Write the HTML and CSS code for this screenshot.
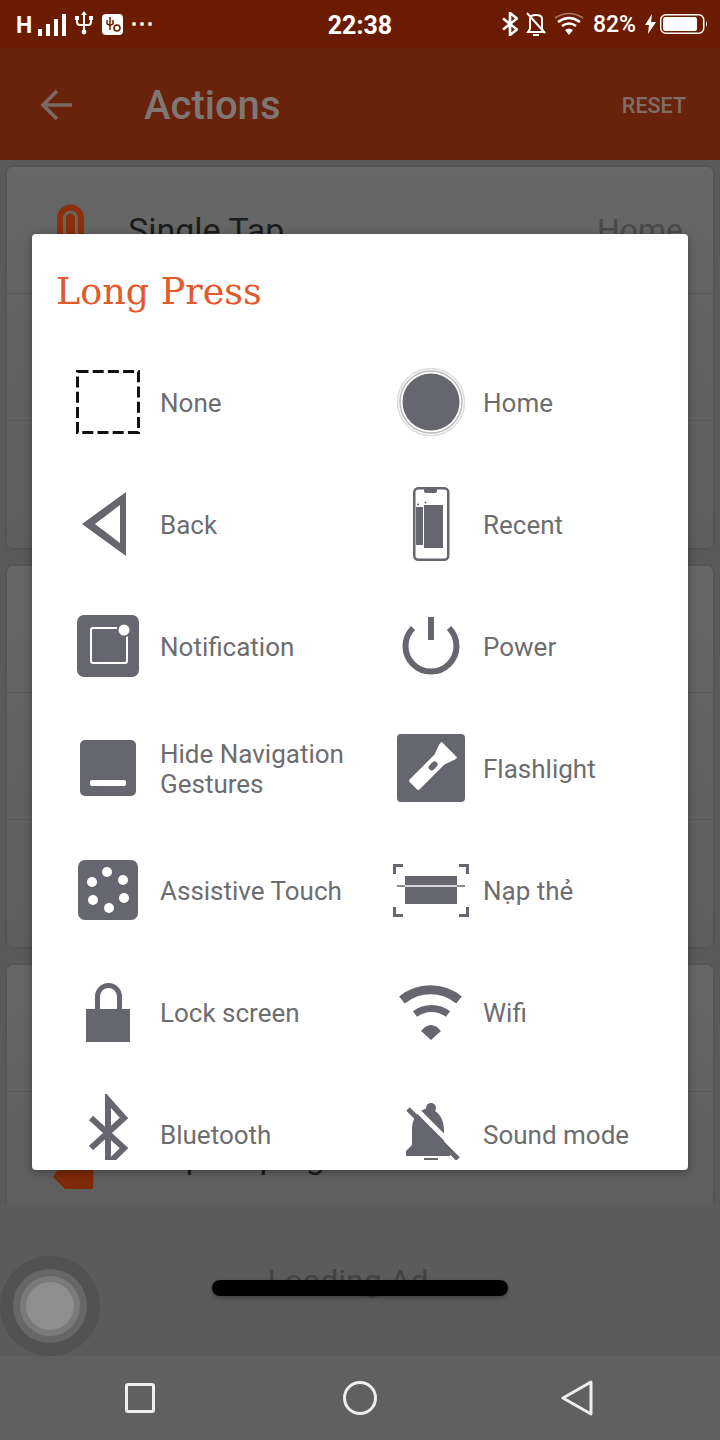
FILE: index.html
```html
<!DOCTYPE html>
<html lang="en">
<head>
  <meta charset="UTF-8">
  <title>Actions</title>
  <link rel="stylesheet" href="styles.css">
</head>
<body>
  <div class="screen">
    <div class="status-bar">
      <div class="status-left">
        <span class="net">H</span>
        <svg class="st-bars" viewBox="0 0 28 22"><path d="M0 15h4v7H0zM8 10h4v12H8zM16 5h4v17h-4zM24 0h4v22h-4z" fill="#fff"/></svg>
        <svg class="st-usb" viewBox="0 0 20 24" fill="none" stroke="#fff" stroke-width="2"><path d="M10 3v18M3 8v3q0 3 3 3h8q3 0 3-3V8"/><path d="M10 0l3 4H7z" fill="#fff" stroke="none"/><circle cx="10" cy="21" r="2.4" fill="#fff" stroke="none"/><path d="M1 5h4v4H1zM15 5h4v4h-4z" fill="#fff" stroke="none"/></svg>
        <svg class="st-app" viewBox="0 0 21 21"><rect width="21" height="21" rx="4" fill="#fff"/><path d="M8 3v13M5 6v3q0 2 3 2t3-2V6" fill="none" stroke="#6b1b00" stroke-width="1.5"/><circle cx="15" cy="14" r="3" fill="none" stroke="#6b1b00" stroke-width="1.6"/></svg>
        <span class="dots"><i></i><i></i><i></i></span>
      </div>
      <div class="clock">22:38</div>
      <div class="status-right">
        <svg class="st-bt" viewBox="0 0 16 24" fill="none" stroke="#fff" stroke-width="2.6"><path d="M1 6.500l14 11-7 5.500V1l7 5.500-14 11"/></svg>
        <svg class="st-bell" viewBox="0 0 20 24" fill="none" stroke="#fff" stroke-width="2"><path d="M4 7v10l-2 3h16l-2-3V7q0-4-6-4T4 7zM1 1l18 20"/><path d="M7 23h6"/></svg>
        <svg class="st-wifi" viewBox="0 0 30 24" fill="none" stroke="#fff"><path d="M1 6Q15-3 29 6" stroke="#a9776a" stroke-width="1.500"/><path d="M4 10q11-8 22 0M8 14q7-5 14 0" stroke-width="2.500"/><path d="M11 18q4-3 8 0l-4 5z" fill="#fff" stroke="none"/></svg>
        <span class="pct">82%</span>
        <svg class="st-bolt" viewBox="0 0 11 20"><path d="M7 0L0 11h4l-1 9 8-12H6z" fill="#fff"/></svg>
        <svg class="st-batt" viewBox="0 0 48 20"><rect x=".75" y=".75" width="43" height="18.500" rx="5" fill="none" stroke="#fff" stroke-width="1.500"/><rect x="3" y="3" width="34" height="14" rx="2.500" fill="#fff"/><path d="M46 7q2 3 0 6z" fill="#fff"/></svg>
      </div>
    </div>

    <div class="app-bar">
      <svg class="back-arrow" viewBox="0 0 32 32" fill="none" stroke="#7d6b63" stroke-width="3.500"><path d="M32 16H3M17 2L3 16l14 14"/></svg>
      <div class="app-title">Actions</div>
      <div class="reset">RESET</div>
    </div>

    <div class="list">
      <div class="card">
        <div class="row">
          <svg class="row-icon" viewBox="0 0 45 70" fill="none"><path d="M10 40V23a10.500 10.500 0 0 1 21 0v17" stroke="#8c2f0b" stroke-width="6"/><path d="M20.500 23v41" stroke="#8c2f0b" stroke-width="9" stroke-linecap="round"/></svg>
          <span class="row-name">Single Tap</span>
          <span class="row-value">Home</span>
        </div>
        <div class="row"></div>
        <div class="row"></div>
      </div>
      <div class="card">
        <div class="row"></div>
        <div class="row"></div>
        <div class="row"></div>
      </div>
      <div class="card">
        <div class="row"></div>
        <div class="row">
          <svg class="row-icon" viewBox="0 0 45 70"><path d="M3 56l12 12h28l1-38H20z" fill="#7e2a08"/></svg>
          <span class="row-name">Snap on ping</span>
        </div>
      </div>
    </div>

    <div class="ad">Loading Ad</div>

    <div class="nav-bar">
      <svg class="nav-square" viewBox="0 0 30 30"><rect x="1.500" y="1.500" width="27" height="27" rx="1.500" fill="none" stroke="#eee" stroke-width="3"/></svg>
      <svg class="nav-circle" viewBox="0 0 34 34"><circle cx="17" cy="17" r="15.500" fill="none" stroke="#eee" stroke-width="3"/></svg>
      <svg class="nav-back" viewBox="0 0 32 36"><path d="M2 18L30 2v32z" fill="none" stroke="#eee" stroke-width="3" stroke-linejoin="round"/></svg>
    </div>

    <div class="assist"><div class="assist-mid"><div class="assist-core"></div></div></div>
    <div class="home-pill"></div>

    <div class="dialog">
      <h2 class="dialog-title">Long Press</h2>
      <div class="grid">
        <div class="item">
          <svg class="icon" viewBox="0 0 80 80"><rect x="9.500" y="9.500" width="61" height="61" fill="none" stroke="#111" stroke-width="3" stroke-dasharray="11 4.200"/></svg>
          <span>None</span>
        </div>
        <div class="item">
          <svg class="icon" viewBox="0 0 80 80"><circle cx="40" cy="40" r="28.500" fill="#66666e"/><circle cx="40" cy="40" r="31" fill="none" stroke="#bbb" stroke-width="1.500"/><circle cx="40" cy="40" r="33.500" fill="none" stroke="#ddd" stroke-width="1.500"/></svg>
          <span>Home</span>
        </div>
        <div class="item">
          <svg class="icon" viewBox="0 0 80 80"><path d="M14 40L58 8v64zM27 40l25 19V21z" fill="#66666e" fill-rule="evenodd"/></svg>
          <span>Back</span>
        </div>
        <div class="item">
          <svg class="icon" viewBox="0 0 80 80"><rect x="23.250" y="4.250" width="34" height="71.500" rx="4" fill="none" stroke="#66666e" stroke-width="2.500"/><path d="M33 5h13v2q0 2-2 2H35q-2 0-2-2z" fill="#66666e"/><path d="M25 23h7v38h-7zM33 21h19v43H33z" fill="#66666e"/><circle cx="27" cy="20.500" r="1" fill="#66666e"/><circle cx="34.500" cy="18.500" r="1" fill="#66666e"/></svg>
          <span>Recent</span>
        </div>
        <div class="item">
          <svg class="icon" viewBox="0 0 80 80"><rect x="9" y="9" width="62" height="62" rx="7" fill="#66666e"/><rect x="23" y="22" width="36" height="35" rx="2" fill="none" stroke="#fff" stroke-width="2"/><circle cx="56" cy="24" r="7.500" fill="#66666e"/><circle cx="56" cy="24" r="5.500" fill="#fff"/></svg>
          <span>Notification</span>
        </div>
        <div class="item">
          <svg class="icon" viewBox="0 0 80 80" fill="none" stroke="#66666e" stroke-width="6"><path d="M22 22A25.500 25.500 0 1 0 58 22"/><path d="M40 11v23"/></svg>
          <span>Power</span>
        </div>
        <div class="item">
          <svg class="icon" viewBox="0 0 80 80"><rect x="12" y="12" width="56" height="56" rx="5" fill="#66666e"/><rect x="22" y="52" width="36" height="6" rx="2" fill="#fff"/></svg>
          <span>Hide Navigation<br>Gestures</span>
        </div>
        <div class="item">
          <svg class="icon" viewBox="0 0 80 80"><rect x="6" y="6" width="68" height="68" rx="4" fill="#66666e"/><g transform="rotate(45 40 40)"><path d="M29 14h22v3l-4 11v35q0 2-2 2H35q-2 0-2-2V28l-4-11z" fill="#fff"/><rect x="37" y="32" width="6" height="10" rx="3" fill="#66666e"/></g></svg>
          <span>Flashlight</span>
        </div>
        <div class="item">
          <svg class="icon" viewBox="0 0 80 80"><rect x="10" y="10" width="60" height="60" rx="7" fill="#66666e"/><g fill="#fff"><circle cx="39" cy="22" r="5"/><circle cx="55" cy="30" r="5"/><circle cx="56" cy="48" r="5"/><circle cx="41" cy="58" r="5"/><circle cx="25" cy="50" r="5"/><circle cx="24" cy="32" r="5"/></g></svg>
          <span>Assistive Touch</span>
        </div>
        <div class="item">
          <svg class="icon" viewBox="0 0 80 80"><path d="M12 15.500H3.500V24M68 15.500h8.500V24M12 65.500H3.500V57M68 65.500h8.500V57" fill="none" stroke="#66666e" stroke-width="3"/><rect x="14" y="26" width="52" height="28" fill="#66666e"/><path d="M6 36h8M66 36h8" stroke="#66666e" stroke-width="1.500"/><path d="M14 36h52" stroke="#fff" stroke-width="1.500"/></svg>
          <span>Nạp thẻ</span>
        </div>
        <div class="item">
          <svg class="icon" viewBox="0 0 80 80"><path d="M29.500 37V24.500a11 11 0 0 1 22 0V37" fill="none" stroke="#66666e" stroke-width="5"/><rect x="18" y="37" width="44" height="33" fill="#66666e"/></svg>
          <span>Lock screen</span>
        </div>
        <div class="item">
          <svg class="icon" viewBox="0 0 80 80" fill="none" stroke="#66666e"><path d="M11 28A45 45 0 0 1 68 28" stroke-width="9"/><path d="M24 42A28 28 0 0 1 57 42" stroke-width="7"/><path d="M30 59Q40 47 50 59L40 68z" fill="#66666e" stroke="none"/></svg>
          <span>Wifi</span>
        </div>
        <div class="item">
          <svg class="icon icon-cut" viewBox="0 0 80 80" fill="none" stroke="#66666e" stroke-width="6"><path d="M23 24l33 30-16 16V6l16 18-33 30"/></svg>
          <span>Bluetooth</span>
        </div>
        <div class="item">
          <svg class="icon icon-cut" viewBox="0 0 80 80"><circle cx="40" cy="14" r="5" fill="#66666e"/><path d="M40 14c-12 0-19 10-19 22v15l-6 6v5h44v-5l-6-6V36c0-12-7-22-19-22z" fill="#66666e"/><path d="M22 12l50 50" stroke="#fff" stroke-width="5"/><path d="M17 15l50 50" stroke="#66666e" stroke-width="5"/><path d="M33 65h14" stroke="#66666e" stroke-width="2"/></svg>
          <span>Sound mode</span>
        </div>
      </div>
    </div>
  </div>
</body>
</html>
```
FILE: styles.css
```css
* {
  box-sizing: border-box;
}
html, body {
  margin: 0;
  padding: 0;
}
body {
  font-family: Roboto, sans-serif;
  background-color: #5a5a5a;
}
svg {
  display: block;
  flex: none;
}
.screen {
  position: relative;
  width: 720px;
  height: 1440px;
  overflow: hidden;
  display: flex;
  flex-direction: column;
}

/* status bar */
.status-bar {
  height: 48px;
  background-color: #6b1b00;
  color: white;
  display: grid;
  grid-template-columns: 1fr auto 1fr;
  align-items: center;
  padding: 0 12px;
}
.status-left, .status-right {
  display: flex;
  align-items: center;
  gap: 8px;
}
.status-right {
  justify-content: flex-end;
}
.net {
  font-size: 23px;
  font-weight: 700;
  width: 14px;
  line-height: 1;
  margin: 2px 0 0 4px;
}
.st-bars { width: 28px; height: 22px; margin-top: 1px; }
.st-usb { width: 20px; height: 24px; margin-top: -2px; }
.st-app { width: 21px; height: 21px; }
.st-bt { width: 16px; height: 24px; }
.st-bell { width: 20px; height: 24px; }
.st-wifi { width: 30px; height: 24px; margin-right: 1px; }
.st-bolt { width: 11px; height: 20px; }
.st-batt { width: 48px; height: 20px; margin-left: -4px; }
.dots {
  display: flex;
  gap: 4px;
  margin-left: 1px;
}
.dots i {
  width: 4px;
  height: 4px;
  border-radius: 50%;
  background: white;
}
.clock {
  font-size: 25px;
  font-weight: 700;
  margin-top: 2px;
}
.pct {
  font-size: 23px;
  font-weight: 500;
  margin-right: 1px;
}

/* app bar */
.app-bar {
  height: 112px;
  background-color: #69230c;
  display: flex;
  align-items: center;
  padding: 0 34px 0 40px;
}
.back-arrow {
  width: 32px;
  height: 32px;
  margin-top: 1px;
}
.app-title {
  margin-left: 72px;
  font-size: 40px;
  font-weight: 500;
  color: #7f7773;
  flex: 1;
  padding-top: 3px;
}
.reset {
  font-size: 21.5px;
  font-weight: 500;
  color: #7e6e66;
  padding-top: 2px;
}

/* list behind the dialog */
.list {
  height: 1045px;
  overflow: hidden;
  padding: 7px 7px 0;
  display: flex;
  flex-direction: column;
  gap: 18px;
}
.card {
  flex: none;
  background: linear-gradient(#676767, #5e5e5e);
  border-radius: 6px;
  box-shadow: 0 0 3px rgba(0,0,0,0.2);
}
.row {
  height: 127px;
  display: flex;
  align-items: center;
  padding: 0 30px 0 43px;
  border-bottom: 1px solid #595959;
  color: #1c1c1c;
  font-size: 34px;
}
.row:last-child {
  border-bottom: none;
}
.row-icon {
  width: 45px;
  height: 70px;
}
.row-name {
  margin-left: 33px;
  flex: 1;
  white-space: nowrap;
}
.row-value {
  font-size: 32px;
  color: #4a4a4a;
}

/* ad strip and nav */
.ad {
  height: 151px;
  background-color: #5b5b5b;
  display: flex;
  align-items: center;
  justify-content: center;
  padding-right: 24px;
  font-size: 32px;
  color: #434343;
}
.nav-bar {
  height: 84px;
  background-color: #606060;
  display: flex;
  align-items: center;
  padding-left: 125px;
}
.nav-square { width: 30px; height: 30px; }
.nav-circle { width: 34px; height: 34px; margin: 0 184px 0 188px; }
.nav-back { width: 32px; height: 36px; }

/* floating bits */
.assist {
  position: absolute;
  left: 0;
  top: 1256px;
  width: 100px;
  height: 100px;
  border-radius: 50%;
  background-color: #525252;
  display: flex;
  align-items: center;
  justify-content: center;
}
.assist-mid {
  width: 74px;
  height: 74px;
  border-radius: 50%;
  background-color: #7a7a7a;
  border: 7px solid #676767;
  display: flex;
  align-items: center;
  justify-content: center;
}
.assist-core {
  width: 48px;
  height: 48px;
  border-radius: 50%;
  background-color: #8e8e8e;
}
.home-pill {
  position: absolute;
  left: 212px;
  top: 1280px;
  width: 296px;
  height: 16px;
  border-radius: 8px;
  background-color: black;
  box-shadow: 0 2px 4px rgba(0,0,0,0.3);
}

/* dialog */
.dialog {
  position: absolute;
  left: 32px;
  top: 234px;
  width: 656px;
  height: 936px;
  background-color: white;
  border-radius: 4px;
  overflow: hidden;
  box-shadow: 0 2px 10px rgba(0,0,0,0.35);
}
.dialog-title {
  margin: 0;
  padding: 34px 24px 0;
  height: 107px;
  font-family: "DejaVu Serif", serif;
  font-weight: 400;
  font-size: 36.5px;
  line-height: 48px;
  color: #e2592b;
}
.grid {
  display: grid;
  grid-template-columns: 323px 1fr;
  grid-auto-rows: 122px;
  padding-left: 36px;
}
.item {
  display: flex;
  align-items: center;
  gap: 12px;
  font-size: 26px;
  line-height: 30px;
  color: #6d6d70;
  white-space: nowrap;
}
.item span {
  margin-top: 2px;
}
.icon {
  width: 80px;
  height: 80px;
}
.icon-cut {
  clip-path: inset(0 0 14px 0);
}
```
